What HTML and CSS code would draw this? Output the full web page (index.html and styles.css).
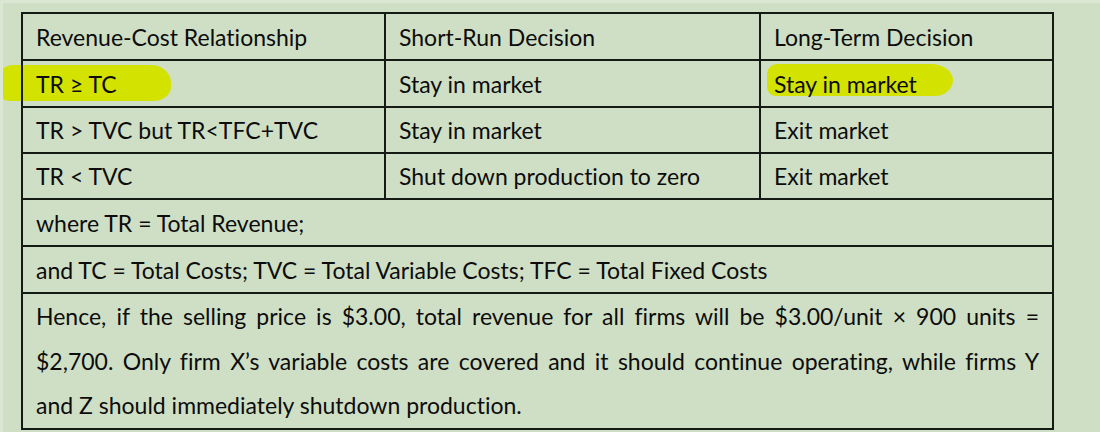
FILE: index.html
```html
<!DOCTYPE html>
<html>
<head>
<meta charset="utf-8">
<link rel="stylesheet" href="styles.css">
</head>
<body>
<div class="page">
  <table class="grid">
    <colgroup>
      <col class="c1"><col class="c2"><col class="c3">
    </colgroup>
    <tr class="r47">
      <td>Revenue-Cost Relationship</td>
      <td>Short-Run Decision</td>
      <td>Long-Term Decision</td>
    </tr>
    <tr class="r47">
      <td class="hl-cell"><span class="hl hl-a"></span>TR ≥ TC</td>
      <td>Stay in market</td>
      <td class="hl-cell"><span class="hl hl-b"></span>Stay in market</td>
    </tr>
    <tr class="r46">
      <td>TR &gt; TVC but TR&lt;TFC+TVC</td>
      <td>Stay in market</td>
      <td>Exit market</td>
    </tr>
    <tr class="r46">
      <td>TR &lt; TVC</td>
      <td>Shut down production to zero</td>
      <td>Exit market</td>
    </tr>
    <tr class="r47">
      <td colspan="3">where TR = Total Revenue;</td>
    </tr>
    <tr class="r47">
      <td colspan="3">and TC = Total Costs; TVC = Total Variable Costs; TFC = Total Fixed Costs</td>
    </tr>
    <tr>
      <td colspan="3" class="para">
        <span class="jl">Hence, if the selling price is $3.00, total revenue for all firms will be $3.00/unit × 900 units =</span>
        <span class="jl">$2,700. Only firm X’s variable costs are covered and it should continue operating, while firms Y</span>
        <span class="ll">and Z should immediately shutdown production.</span>
      </td>
    </tr>
  </table>
</div>
</body>
</html>
```

FILE: styles.css
```css
html {
  background: #cfdfc5;
}
body {
  margin: 0;
  width: 1100px;
  height: 432px;
  overflow: hidden;
  font-family: Lato, "Liberation Sans", sans-serif;
  font-variant-ligatures: none;
  color: #0c0c0c;
  border-left: 3px solid #dbe7d3;
  border-top: 3px solid #dbe7d3;
  box-sizing: border-box;
}
.page {
  padding: 9px 0 0 18px;
}
.grid {
  border-collapse: collapse;
  width: 1031px;
  table-layout: fixed;
  font-size: 23px;
}
.c1 { width: 363px; }
.c2 { width: 375px; }
.c3 { width: 293px; }
.grid td {
  border: 2px solid #151a15;
  padding: 0 13px;
  vertical-align: middle;
  white-space: nowrap;
}
.r47 td { height: 45px; }
.r46 td { height: 44px; }
.hl-cell {
  position: relative;
}
.hl {
  position: absolute;
  z-index: -1;
  background: #d4e200;
  border-radius: 14px 20px 18px 10px / 12px 18px 14px 10px;
}
.hl-a {
  left: -24px;
  width: 172px;
  top: 4px;
  height: 36px;
}
.hl-b {
  left: 6px;
  width: 186px;
  top: 3px;
  height: 32px;
  border-radius: 10px 22px 18px 8px / 10px 16px 16px 10px;
}
.para {
  padding: 0 14px;
  height: 132px;
}
.jl, .ll {
  display: block;
  line-height: 44.6px;
  white-space: normal;
}
.jl {
  text-align: justify;
  text-align-last: justify;
}
.ll {
  text-align: left;
}
```
